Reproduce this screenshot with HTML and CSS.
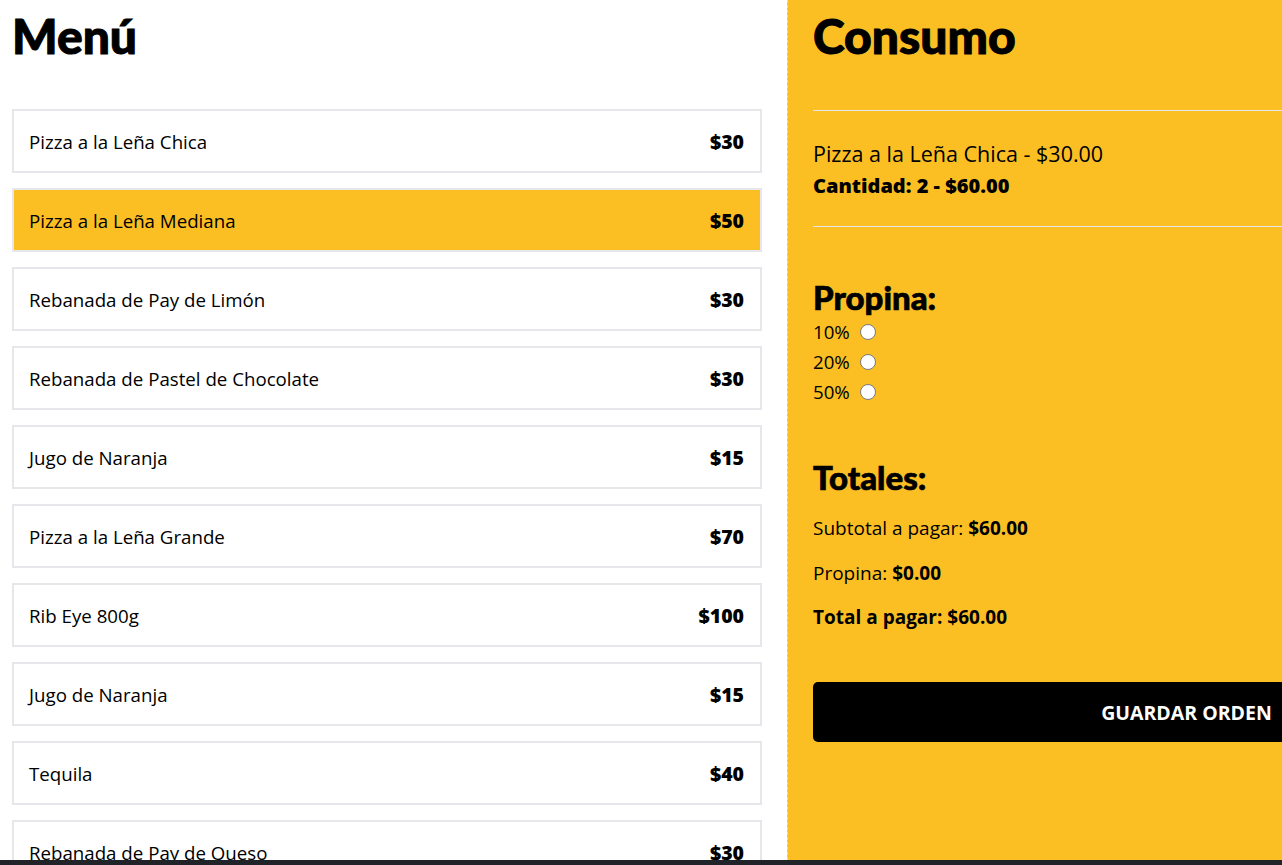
FILE: index.html
```html
<!DOCTYPE html>
<html lang="es">
<head>
<meta charset="utf-8">
<title>Menú</title>
<link rel="stylesheet" href="styles.css">
</head>
<body>
<div class="layout">
  <main class="menu">
    <h1 class="title">Menú</h1>
    <ul class="items">
      <li class="item"><span class="name">Pizza a la Leña Chica</span><span class="price">$30</span></li>
      <li class="item item-active"><span class="name">Pizza a la Leña Mediana</span><span class="price">$50</span></li>
      <li class="item"><span class="name">Rebanada de Pay de Limón</span><span class="price">$30</span></li>
      <li class="item"><span class="name">Rebanada de Pastel de Chocolate</span><span class="price">$30</span></li>
      <li class="item"><span class="name">Jugo de Naranja</span><span class="price">$15</span></li>
      <li class="item"><span class="name">Pizza a la Leña Grande</span><span class="price">$70</span></li>
      <li class="item"><span class="name">Rib Eye 800g</span><span class="price">$100</span></li>
      <li class="item"><span class="name">Jugo de Naranja</span><span class="price">$15</span></li>
      <li class="item"><span class="name">Tequila</span><span class="price">$40</span></li>
      <li class="item"><span class="name">Rebanada de Pay de Queso</span><span class="price">$30</span></li>
    </ul>
  </main>
  <aside class="order">
    <h1 class="title">Consumo</h1>
    <hr class="rule rule-top">
    <div class="order-item">
      <p class="order-name">Pizza a la Leña Chica - $30.00</p>
      <p class="order-qty">Cantidad: 2 - $60.00</p>
    </div>
    <hr class="rule rule-bottom">
    <h2 class="subtitle subtitle-tip">Propina:</h2>
    <form class="tips">
      <label class="tip">10% <input class="radio" type="radio" name="tip" value="10"></label>
      <label class="tip">20% <input class="radio" type="radio" name="tip" value="20"></label>
      <label class="tip">50% <input class="radio" type="radio" name="tip" value="50"></label>
    </form>
    <h2 class="subtitle subtitle-totals">Totales:</h2>
    <div class="totals">
      <p class="total-line">Subtotal a pagar: <strong>$60.00</strong></p>
      <p class="total-line">Propina: <strong>$0.00</strong></p>
      <p class="total-line total-strong">Total a pagar: $60.00</p>
    </div>
    <button class="save" type="button">GUARDAR ORDEN</button>
  </aside>
</div>
<div class="hbar"></div>
</body>
</html>
```
FILE: styles.css
```css
html, body {
  margin: 0;
  padding: 0;
  overflow: hidden;
  height: 100%;
}
body {
  font-family: "Open Sans", "Noto Sans", sans-serif;
  color: #000;
  background: #fff;
}
.layout {
  display: flex;
  width: 1585px;
  height: 100vh;
}
.menu {
  flex: 0 0 787px;
  box-sizing: border-box;
  padding: 12px 25px 0 12px;
  height: 860px;
  overflow: hidden;
}
.title {
  margin: 0;
  font-family: "Lato", sans-serif;
  font-weight: 900;
  font-size: 48px;
  line-height: 48px;
  -webkit-text-stroke: 1px #000;
}
.items {
  list-style: none;
  margin: 49px 0 0;
  padding: 0;
  display: flex;
  flex-direction: column;
  gap: 15px;
}
.item {
  display: flex;
  justify-content: space-between;
  align-items: center;
  border: 2px solid #e5e7eb;
  padding: 17px 16px 15px 15px;
  height: 28px;
  font-size: 18.7px;
  line-height: 28px;
  background: #fff;
}
.item-active {
  background: #fbbf24;
}
.price {
  font-weight: 800;
  font-size: 19.5px;
}
.order {
  flex: 0 0 797px;
  box-sizing: border-box;
  background: #fbbf24;
  border-left: 1px dashed #dcdcdc;
  padding: 12px 25px 0 25px;
}
.rule {
  border: 0;
  height: 1px;
  background: #e5e7eb;
  margin: 0;
}
.rule-top {
  margin-top: 50px;
}
.order-item {
  padding-top: 29px;
  padding-bottom: 28px;
}
.order-item p {
  margin: 0;
}
.order-name {
  font-size: 21.5px;
  font-weight: 400;
  line-height: 28px;
}
.order-qty {
  margin-top: 6px !important;
  font-size: 20px;
  font-weight: 800;
  line-height: 24px;
}
.subtitle {
  margin: 0;
  font-family: "Lato", sans-serif;
  font-weight: 900;
  font-size: 33px;
  line-height: 36px;
  -webkit-text-stroke: 0.7px #000;
}
.subtitle-tip {
  margin-top: 52px;
}
.tips {
  margin-top: 2px;
  display: flex;
  flex-direction: column;
}
.tip {
  display: flex;
  align-items: center;
  height: 30px;
  font-size: 18.7px;
  line-height: 30px;
  white-space: pre;
}
.radio {
  appearance: none;
  -webkit-appearance: none;
  width: 16px;
  height: 16px;
  margin: 0 0 0 5px;
  border: 1px solid #7a7a7a;
  border-radius: 50%;
  background: #fff;
  box-sizing: border-box;
}
.subtitle-totals {
  margin-top: 52px;
}
.totals {
  margin-top: 19px;
  display: flex;
  flex-direction: column;
  gap: 16.5px;
}
.total-line {
  margin: 0;
  font-size: 19px;
  line-height: 28px;
}
.total-line strong,
.total-strong {
  font-weight: 700;
}
.save {
  display: block;
  margin-top: 51px;
  width: 747px;
  height: 60px;
  border: 0;
  border-radius: 5px;
  background: #000;
  color: #fff;
  font-family: "Open Sans", sans-serif;
  font-weight: 700;
  font-size: 19.5px;
  text-align: center;
  padding: 0;
}
.hbar {
  position: fixed;
  left: 0;
  right: 0;
  bottom: 0;
  height: 5px;
  background: #202328;
}
```
